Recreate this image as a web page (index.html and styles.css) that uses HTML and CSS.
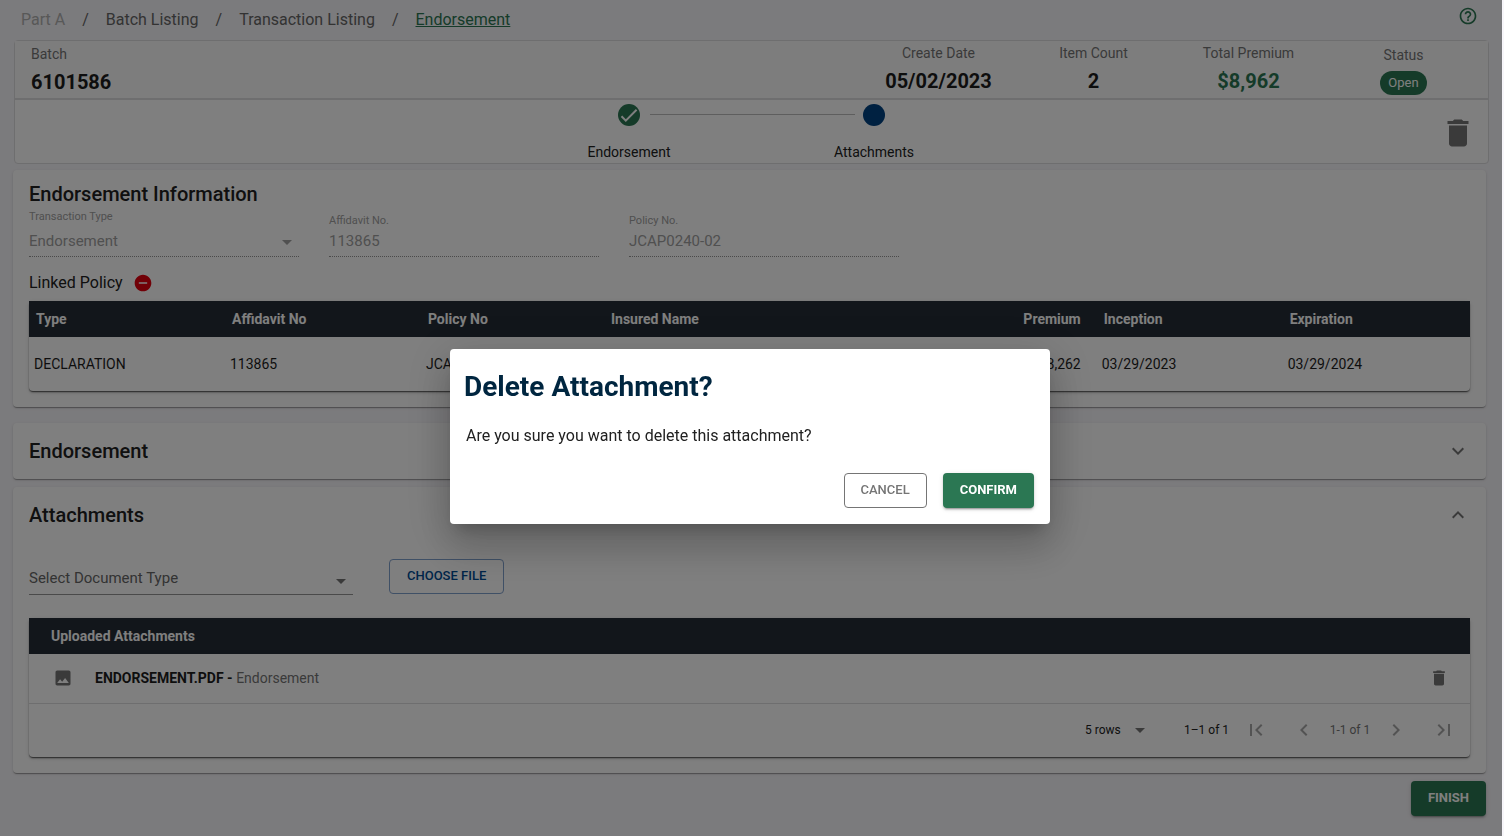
FILE: index.html
```html
<!DOCTYPE html>
<html lang="en">
<head>
<meta charset="utf-8">
<title>Endorsement</title>
<link rel="stylesheet" href="styles.css">
</head>
<body>
<div class="page">
  <header class="topbar">
    <nav class="crumbs" aria-label="Breadcrumb">
      <span class="crumb-disabled">Part A</span><span>/</span>
      <a href="#batches">Batch Listing</a><span>/</span>
      <a href="#transactions">Transaction Listing</a><span>/</span>
      <a href="#endorsement" class="crumb-current">Endorsement</a>
    </nav>
    <button class="icon-btn help" aria-label="Help">
      <svg width="20" height="20" viewBox="0 0 24 24"><path d="M11 18h2v-2h-2v2zm1-16C6.48 2 2 6.48 2 12s4.480 10 10 10 10-4.480 10-10S17.520 2 12 2zm0 18c-4.410 0-8-3.590-8-8s3.590-8 8-8 8 3.590 8 8-3.590 8-8 8zm0-14c-2.210 0-4 1.790-4 4h2c0-1.100.9-2 2-2s2 .9 2 2c0 2-3 1.750-3 5h2c0-2.250 3-2.500 3-5 0-2.210-1.790-4-4-4z"/></svg>
    </button>
  </header>

  <section class="summary">
    <div class="summary-top">
      <div class="metric batch"><span class="metric-label">Batch</span><strong>6101586</strong></div>
      <div class="metric"><span class="metric-label">Create Date</span><strong>05/02/2023</strong></div>
      <div class="metric"><span class="metric-label">Item Count</span><strong>2</strong></div>
      <div class="metric"><span class="metric-label">Total Premium</span><strong class="money">$8,962</strong></div>
      <div class="metric status"><span class="metric-label">Status</span><span class="chip">Open</span></div>
    </div>
    <div class="summary-steps">
      <ol class="stepper">
        <li class="step">
          <svg class="step-icon" width="22" height="22" viewBox="0 0 22 22"><circle cx="11" cy="11" r="11" fill="#2b7753"/><path d="M3.500 12.300l4.300 4.300L18.600 5.800" fill="none" stroke="#fff" stroke-width="2"/></svg>
          <span>Endorsement</span>
        </li>
        <li class="step step-linked">
          <svg class="step-icon" width="22" height="22" viewBox="0 0 22 22"><circle cx="11" cy="11" r="11" fill="#004282"/></svg>
          <span>Attachments</span>
        </li>
      </ol>
      <button class="icon-btn delete-all" aria-label="Delete transaction">
        <svg width="36" height="36" viewBox="0 0 24 24"><path d="M6 19c0 1.100.9 2 2 2h8c1.100 0 2-.9 2-2V7H6v12zM19 4h-3.500l-1-1h-5l-1 1H5v2h14V4z"/></svg>
      </button>
    </div>
  </section>

  <main class="cards">
    <section class="card info">
      <h2>Endorsement Information</h2>
      <div class="fields">
        <div class="field field-select">
          <label for="ttype">Transaction Type</label>
          <div class="select-wrap">
            <select id="ttype" disabled><option>Endorsement</option></select>
            <svg width="24" height="24" viewBox="0 0 24 24"><path d="M7 10l5 5 5-5z"/></svg>
          </div>
        </div>
        <div class="field"><label for="affidavit">Affidavit No.</label><input id="affidavit" value="113865" disabled></div>
        <div class="field"><label for="policy">Policy No.</label><input id="policy" value="JCAP0240-02" disabled></div>
      </div>
      <div class="linked">
        <h3>Linked Policy</h3>
        <button class="icon-btn unlink" aria-label="Remove linked policy">
          <svg width="20" height="20" viewBox="0 0 24 24"><path d="M12 2C6.480 2 2 6.480 2 12s4.480 10 10 10 10-4.480 10-10S17.520 2 12 2zm5 11H7v-2h10v2z"/></svg>
        </button>
      </div>
      <div class="sheet">
        <table class="policies">
          <colgroup><col class="c-type"><col class="c-aff"><col class="c-pol"><col class="c-ins"><col class="c-prem"><col class="c-inc"><col></colgroup>
          <thead><tr><th>Type</th><th>Affidavit No</th><th>Policy No</th><th>Insured Name</th><th class="num">Premium</th><th>Inception</th><th>Expiration</th></tr></thead>
          <tbody><tr><td>DECLARATION</td><td>113865</td><td>JCAP0240-02</td><td></td><td class="num">$8,262</td><td>03/29/2023</td><td>03/29/2024</td></tr></tbody>
        </table>
      </div>
    </section>

    <section class="card panel-closed">
      <div class="panel-head">
        <h2>Endorsement</h2>
        <button class="icon-btn" aria-label="Expand Endorsement"><svg width="24" height="24" viewBox="0 0 24 24"><path d="M16.590 8.590L12 13.170 7.410 8.590 6 10l6 6 6-6z"/></svg></button>
      </div>
    </section>

    <section class="card panel-open">
      <div class="panel-head">
        <h2>Attachments</h2>
        <button class="icon-btn" aria-label="Collapse Attachments"><svg width="24" height="24" viewBox="0 0 24 24"><path d="M12 8l-6 6 1.410 1.410L12 10.830l4.590 4.580L18 14z"/></svg></button>
      </div>
      <div class="upload">
        <div class="select-wrap doc-type">
          <select aria-label="Select Document Type"><option>Select Document Type</option></select>
          <svg width="24" height="24" viewBox="0 0 24 24"><path d="M7 10l5 5 5-5z"/></svg>
        </div>
        <button class="btn btn-blue">CHOOSE FILE</button>
      </div>
      <div class="sheet">
        <table class="files">
          <thead><tr><th colspan="3">Uploaded Attachments</th></tr></thead>
          <tbody><tr>
            <td class="file-icon"><svg width="20" height="20" viewBox="0 0 24 24"><path d="M21 19V5c0-1.100-.9-2-2-2H5c-1.100 0-2 .9-2 2v14c0 1.100.9 2 2 2h14c1.100 0 2-.9 2-2zM8.500 13.500l2.500 3.010L14.500 12l4.500 6H5l3.500-4.500z"/></svg></td>
            <td><strong>ENDORSEMENT.PDF - </strong><span class="muted">Endorsement</span></td>
            <td class="file-action"><button class="icon-btn" aria-label="Delete attachment"><svg width="20" height="20" viewBox="0 0 24 24"><path d="M6 19c0 1.100.9 2 2 2h8c1.100 0 2-.9 2-2V7H6v12zM19 4h-3.500l-1-1h-5l-1 1H5v2h14V4z"/></svg></button></td>
          </tr></tbody>
        </table>
        <div class="pager">
          <div class="select-wrap rows">
            <select aria-label="Rows per page"><option>5 rows</option></select>
            <svg width="24" height="24" viewBox="0 0 24 24"><path d="M7 10l5 5 5-5z"/></svg>
          </div>
          <span class="range">1–1 of 1</span>
          <button class="icon-btn" disabled aria-label="First page"><svg width="24" height="24" viewBox="0 0 24 24"><path d="M18.410 16.590L13.820 12l4.590-4.590L17 6l-6 6 6 6zM6 6h2v12H6z"/></svg></button>
          <button class="icon-btn" disabled aria-label="Previous page"><svg width="24" height="24" viewBox="0 0 24 24"><path d="M15.410 7.410L14 6l-6 6 6 6 1.410-1.410L10.830 12z"/></svg></button>
          <span class="page-now">1-1 of 1</span>
          <button class="icon-btn" disabled aria-label="Next page"><svg width="24" height="24" viewBox="0 0 24 24"><path d="M10 6L8.590 7.410 13.170 12l-4.580 4.590L10 18l6-6z"/></svg></button>
          <button class="icon-btn" disabled aria-label="Last page"><svg width="24" height="24" viewBox="0 0 24 24"><path d="M5.590 7.410L10.180 12l-4.590 4.590L7 18l6-6-6-6zM16 6h2v12h-2z"/></svg></button>
        </div>
      </div>
    </section>
    <div class="actions"><button class="btn btn-green">FINISH</button></div>
  </main>
</div>

<div class="backdrop">
  <div class="modal" role="dialog" aria-modal="true" aria-labelledby="modal-title">
    <h1 id="modal-title">Delete Attachment?</h1>
    <p>Are you sure you want to delete this attachment?</p>
    <div class="modal-actions">
      <button class="btn btn-plain">CANCEL</button>
      <button class="btn btn-green">CONFIRM</button>
    </div>
  </div>
</div>
</body>
</html>
```
FILE: styles.css
```css
* { box-sizing: border-box; }
html { background: #f7f6fa; }
body { margin: 0; font-family: Roboto, "Liberation Sans", sans-serif; font-size: 14px; line-height: 20px; color: #212121; }
h1, h2, h3, p, ol { margin: 0; padding: 0; }
button, input, select { font: inherit; color: inherit; }
svg { display: block; fill: currentColor; }

.page { padding: 0 15px 20px 13px; }
.icon-btn { display: flex; padding: 0; border: 0; background: none; color: #757575; }
.icon-btn:disabled { color: #a6a6a6; }

.topbar { display: flex; justify-content: space-between; align-items: flex-start; height: 40px; padding: 6px 11px 0 8px; }
.crumbs { display: flex; gap: 17px; font-size: 16px; line-height: 28px; color: #666; }
.crumbs a { color: inherit; text-decoration: none; }
.crumbs .crumb-disabled { color: #b0b0b0; }
.crumbs .crumb-current { color: #2b7753; text-decoration: underline; }
.help { color: #2b7753; }

.summary { margin-left: 1px; border: 1px solid #dcdcdf; border-radius: 4px; background: #fff; }
.summary-top { display: flex; padding: 2px 7px 0 16px; min-height: 59px; border-bottom: 2px solid #dcdcdf; background: #fbfbfb; }
.metric { display: flex; flex-direction: column; align-items: center; gap: 2px; width: 155px; color: #1d1d1d; }
.metric strong { font-size: 20px; font-weight: 700; line-height: 32px; }
.metric .money { color: #2b7753; }
.metric-label { color: #757575; }
.batch { flex: 1; align-items: flex-start; padding-top: 1px; }
.status { padding-top: 2px; }
.chip { margin-top: 4px; padding: 0 8px; border-radius: 12px; background: #2b7753; color: #fff; line-height: 24px; font-size: 13px; }

.summary-steps { display: grid; grid-template-columns: 1fr 490px 1fr; align-items: center; min-height: 63px; padding-top: 2px; }
.stepper { grid-column: 2; display: flex; list-style: none; }
.step { position: relative; flex: 1; display: flex; flex-direction: column; align-items: center; gap: 16px; }
.step-linked::before { content: ""; position: absolute; top: 10px; left: -102px; width: 205px; border-top: 1px solid #bdbdbd; }
.delete-all { justify-self: end; margin-right: 12px; }

.cards { padding: 6px 3px 0 0; }
.card { padding: 0 16px; border-radius: 4px; background: #fff; box-shadow: 0 2px 1px -1px rgba(0,0,0,.2), 0 1px 1px rgba(0,0,0,.14), 0 1px 3px rgba(0,0,0,.12); }
h2 { font-size: 20px; font-weight: 500; line-height: 28px; }
.info { padding-top: 10px; padding-bottom: 16px; margin-bottom: 16px; }
.fields { display: flex; gap: 30px; height: 49px; align-items: flex-end; color: #a0a0a0; }
.field { width: 270px; }
.field label { display: block; font-size: 11px; line-height: 12px; }
.field-select label { margin-bottom: 4px; }
.field input, .select-wrap select { display: block; width: 100%; height: 30px; padding: 0 0 1px; border: 0; border-bottom: 1px solid #949494; border-radius: 0; background: none; outline: 0; appearance: none; font-size: 15px; opacity: 1; }
.field input, .field select { color: #a0a0a0; border-bottom-style: dotted !important; }
.select-wrap { position: relative; }
.select-wrap svg { position: absolute; right: 0; top: 3px; pointer-events: none; color: #757575; }
.field .select-wrap svg { color: #a0a0a0; }

.linked { display: flex; align-items: center; gap: 10px; height: 44px; padding-top: 8px; }
h3 { font-size: 16px; font-weight: 400; line-height: 24px; }
.unlink { color: #e3000f; }

.sheet { border-radius: 4px; box-shadow: 0 3px 1px -2px rgba(0,0,0,.2), 0 2px 2px rgba(0,0,0,.14), 0 1px 5px rgba(0,0,0,.12), 0 1px 1px rgba(0,0,0,.4); }
table { width: 100%; border-collapse: collapse; table-layout: fixed; }
th { height: 36px; padding: 0 7px; background: #242c36; color: #fff; text-align: left; font-weight: 700; }
td { height: 54px; padding: 0 5px; color: #1d1d1d; }
th.num, td.num { text-align: right; padding-right: 16px; }
.c-type, .c-aff { width: 13.6%; }
.c-pol { width: 12.7%; }
.c-ins { width: 20.7%; }
.c-prem { width: 13.5%; }
.c-inc { width: 12.9%; }

.panel-head { display: flex; align-items: center; justify-content: space-between; height: 56px; }
.panel-closed { margin-bottom: 8px; }
.panel-open { padding-bottom: 16px; }
.upload { display: flex; align-items: flex-start; gap: 36px; padding: 16px 0 23px; }
.doc-type { width: 324px; }
.doc-type select { height: 36px; color: #666; padding-top: 4px; }
.doc-type svg { top: 10px; }

.files { table-layout: auto; }
.files th { padding: 0 22px; }
.files td { height: 49px; padding: 0; border-bottom: 1px solid #dcdcdf; }
.files td.file-icon { width: 66px; padding-left: 24px; color: #757575; }
.files strong { font-weight: 700; }
.files td.file-action { width: 41px; }
.muted { color: #757575; }
.pager { display: flex; align-items: center; justify-content: flex-end; height: 53px; padding-right: 14px; font-size: 12px; }
.rows { width: 67px; margin-right: 32px; }
.rows select { height: 24px; border: 0; font-size: 12px; }
.rows svg { top: 0; }
.range { width: 60px; }
.page-now { width: 68px; text-align: center; color: #757575; }
.pager .icon-btn + .icon-btn { margin-left: 24px; }

.btn { height: 35px; padding: 0 16px 1px; border: 1px solid; border-radius: 4px; background: none; font-size: 13px; font-weight: 500; }
.btn-blue { padding: 0 17px 1px; color: #004b93; border-color: #7fa0cc; }
.btn-plain { color: #757575; border-color: #757575; }
.btn-green { padding: 0 17px 1px; border: 0; background: #2b7753; color: #fff; font-weight: 700; box-shadow: 0 3px 1px -2px rgba(0,0,0,.2), 0 2px 2px rgba(0,0,0,.14), 0 1px 5px rgba(0,0,0,.12); }
.actions { display: flex; justify-content: flex-end; padding-top: 8px; }

.backdrop { position: fixed; inset: 0 2px 0 0; display: flex; align-items: center; justify-content: center; padding: 37px 2px 0 0; background: rgba(0,0,0,.5); }
.modal { width: 600px; padding: 16px; border-radius: 4px; background: #fff; box-shadow: 0 11px 15px -7px rgba(0,0,0,.2), 0 24px 38px 3px rgba(0,0,0,.14), 0 9px 46px 8px rgba(0,0,0,.12); }
.modal h1 { margin-left: -2px; font-size: 28px; font-weight: 700; line-height: 44px; color: #002640; }
.modal p { padding: 15px 0 25px; font-size: 16px; line-height: 24px; }
.modal-actions { display: flex; justify-content: flex-end; gap: 16px; }
```
